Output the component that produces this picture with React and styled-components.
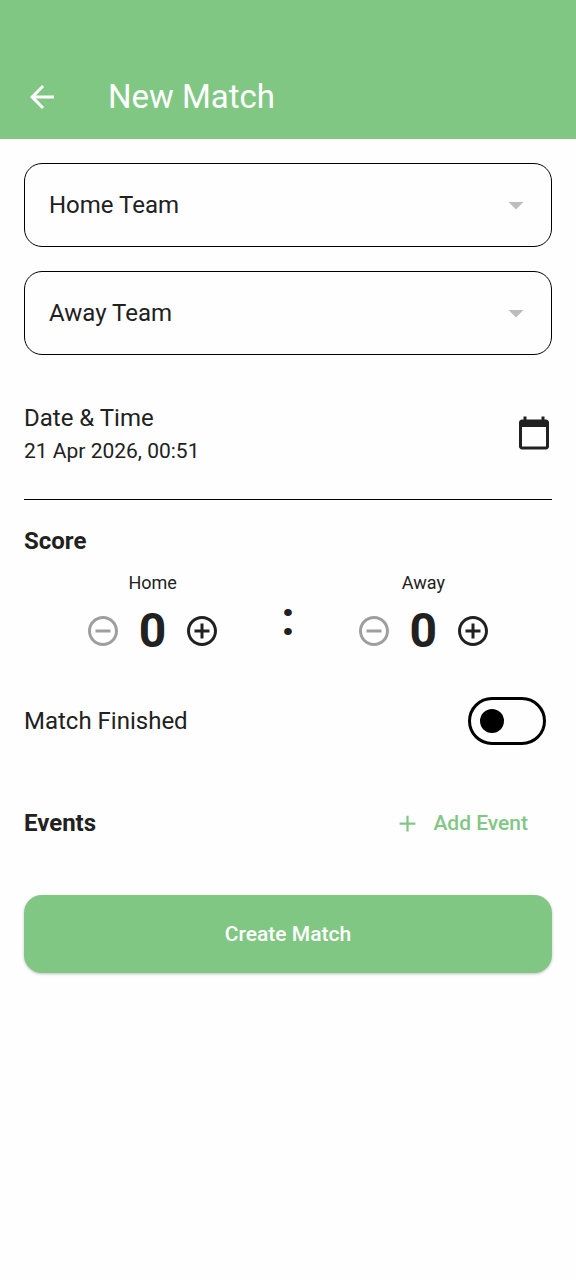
import React, { useState } from "react";
import styled, { createGlobalStyle } from "styled-components";
import {
  MdAdd,
  MdAddCircleOutline,
  MdArrowBack,
  MdArrowDropDown,
  MdCalendarToday,
  MdRemoveCircleOutline,
} from "react-icons/md";

const GlobalStyle = createGlobalStyle`
  * {
    box-sizing: border-box;
  }
  body {
    margin: 0;
    background: #fefefe;
    color: #212121;
    font-family: Roboto, "Liberation Sans", sans-serif;
  }
  button, select {
    font-family: inherit;
    color: inherit;
    cursor: pointer;
  }
  svg {
    display: block;
  }
`;

const Header = styled.header`
  display: flex;
  align-items: center;
  gap: 42px;
  height: 139px;
  padding: 55px 6px 0;
  background: #81c784;
  color: white;
  h1 {
    margin: 0;
    font-size: 33px;
    line-height: 42px;
    font-weight: 400;
  }
`;

const IconButton = styled.button`
  display: flex;
  align-items: center;
  justify-content: center;
  width: 72px;
  height: 72px;
  padding: 0;
  border: none;
  border-radius: 50%;
  background: none;
  font-size: 36px;
  &:disabled {
    color: #9e9e9e;
    cursor: default;
  }
`;

const BackButton = styled(IconButton)`
  color: white;
  width: 60px;
  padding-left: 12px;
`;

const Form = styled.form`
  display: flex;
  flex-direction: column;
  padding: 24px;
`;

const SelectBox = styled.div`
  display: grid;
  align-items: center;
  margin-bottom: 24px;
  select, svg {
    grid-area: 1 / 1;
  }
  select {
    appearance: none;
    width: 100%;
    height: 84px;
    padding: 0 60px 0 24px;
    border: 1px solid black;
    border-radius: 18px;
    background: transparent;
    font-size: 24px;
  }
  svg {
    justify-self: end;
    margin-right: 18px;
    font-size: 36px;
    color: #bdbdbd;
    pointer-events: none;
  }
`;

const DateRow = styled.button`
  display: flex;
  align-items: center;
  justify-content: space-between;
  min-height: 108px;
  padding: 0;
  border: none;
  background: none;
  text-align: left;
  svg {
    font-size: 36px;
  }
`;

const Label = styled.span`
  display: block;
  font-size: 24px;
  line-height: 36px;
`;

const DateValue = styled.span`
  display: block;
  font-size: 21px;
  line-height: 30px;
`;

const Divider = styled.hr`
  width: 100%;
  margin: 12px 0 23px;
  border: none;
  border-top: 1px solid black;
`;

const Heading = styled.h2`
  margin: 0;
  font-size: 24px;
  line-height: 36px;
  font-weight: 700;
`;

const ScoreRow = styled.div`
  display: flex;
  align-items: center;
  justify-content: space-evenly;
  margin: 12px 0;
`;

const Team = styled.div`
  display: flex;
  flex-direction: column;
  align-items: center;
  font-size: 18px;
  line-height: 24px;
`;

const Stepper = styled.div`
  display: flex;
  align-items: center;
`;

const Digit = styled.span`
  font-size: 48px;
  line-height: 60px;
  font-weight: 700;
`;

const SwitchRow = styled.label`
  display: flex;
  align-items: center;
  justify-content: space-between;
  min-height: 84px;
  padding-right: 6px;
  cursor: pointer;
`;

const Switch = styled.input`
  appearance: none;
  display: flex;
  align-items: center;
  width: 78px;
  height: 48px;
  margin: 0;
  padding: 0 9px;
  border: 3px solid black;
  border-radius: 24px;
  cursor: pointer;
  &::before {
    content: "";
    width: 24px;
    height: 24px;
    border-radius: 50%;
    background: black;
  }
  &:checked {
    justify-content: flex-end;
    background: #81c784;
  }
`;

const EventsRow = styled.div`
  display: flex;
  align-items: center;
  justify-content: space-between;
  min-height: 72px;
  margin: 24px 0 36px;
`;

const TextButton = styled.button`
  display: flex;
  align-items: center;
  gap: 12px;
  height: 60px;
  padding: 0 24px;
  border: none;
  background: none;
  color: #81c784;
  font-size: 21px;
  font-weight: 500;
  svg {
    font-size: 27px;
  }
`;

const SubmitButton = styled.button`
  height: 78px;
  border: none;
  border-radius: 18px;
  background: #81c784;
  color: white;
  font-size: 21px;
  font-weight: 500;
  box-shadow: 0 1px 3px rgba(0, 0, 0, 0.25);
`;

function TeamSelect({ label }) {
  return (
    <SelectBox>
      <select aria-label={label} defaultValue="">
        <option value="">{label}</option>
      </select>
      <MdArrowDropDown />
    </SelectBox>
  );
}

function TeamScore({ name }) {
  const [score, setScore] = useState(0);
  return (
    <Team>
      <span>{name}</span>
      <Stepper>
        <IconButton
          type="button"
          aria-label={`Decrease ${name} score`}
          disabled={score === 0}
          onClick={() => setScore(score - 1)}
        >
          <MdRemoveCircleOutline />
        </IconButton>
        <Digit>{score}</Digit>
        <IconButton
          type="button"
          aria-label={`Increase ${name} score`}
          onClick={() => setScore(score + 1)}
        >
          <MdAddCircleOutline />
        </IconButton>
      </Stepper>
    </Team>
  );
}

function App() {
  const [finished, setFinished] = useState(false);
  return (
    <>
      <GlobalStyle />
      <Header>
        <BackButton type="button" aria-label="Back">
          <MdArrowBack />
        </BackButton>
        <h1>New Match</h1>
      </Header>
      <Form onSubmit={(e) => e.preventDefault()}>
        <TeamSelect label="Home Team" />
        <TeamSelect label="Away Team" />
        <DateRow type="button">
          <span>
            <Label>Date &amp; Time</Label>
            <DateValue>21 Apr 2026, 00:51</DateValue>
          </span>
          <MdCalendarToday />
        </DateRow>
        <Divider />
        <Heading>Score</Heading>
        <ScoreRow>
          <TeamScore name="Home" />
          <Digit>:</Digit>
          <TeamScore name="Away" />
        </ScoreRow>
        <SwitchRow>
          <Label>Match Finished</Label>
          <Switch
            type="checkbox"
            role="switch"
            checked={finished}
            onChange={(e) => setFinished(e.target.checked)}
          />
        </SwitchRow>
        <EventsRow>
          <Heading>Events</Heading>
          <TextButton type="button">
            <MdAdd />
            Add Event
          </TextButton>
        </EventsRow>
        <SubmitButton type="submit">Create Match</SubmitButton>
      </Form>
    </>
  );
}

export default App;
